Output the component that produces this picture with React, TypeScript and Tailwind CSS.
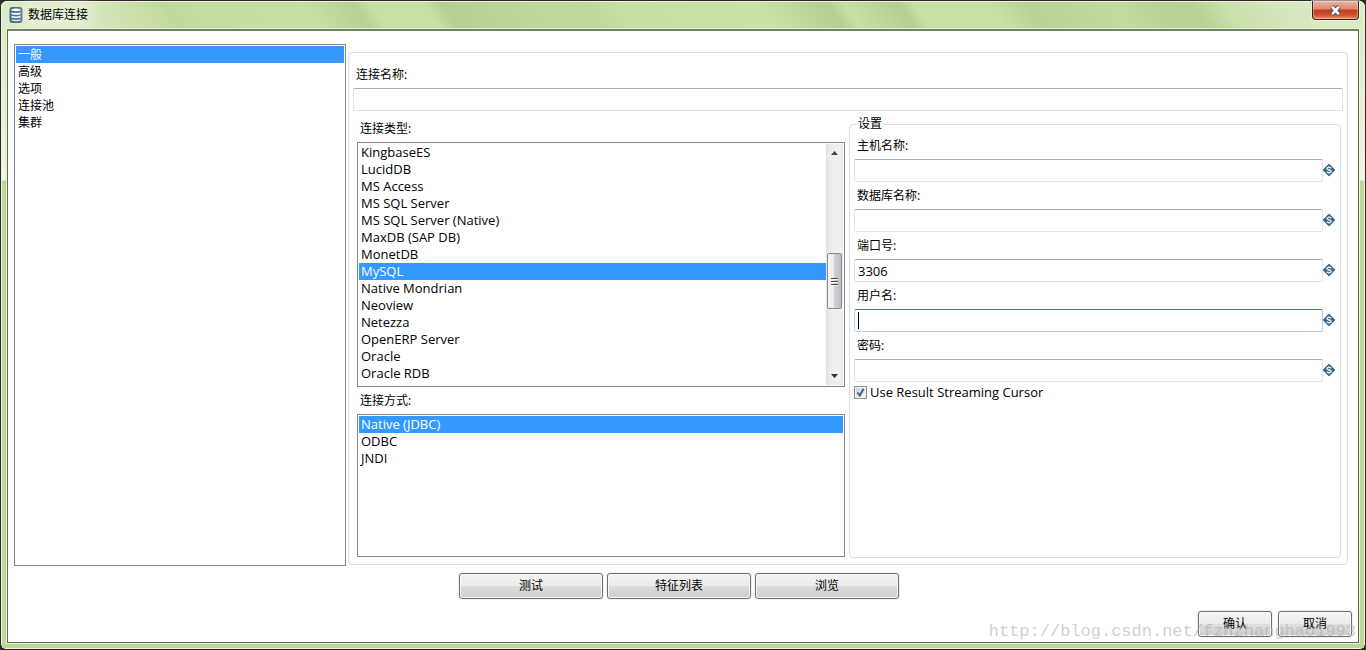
import { useState } from 'react'
import type { ReactNode } from 'react'

const SECTIONS = ['一般', '高级', '选项', '连接池', '集群']

const CONNECTION_TYPES = [
  'KingbaseES', 'LucidDB', 'MS Access', 'MS SQL Server', 'MS SQL Server (Native)',
  'MaxDB (SAP DB)', 'MonetDB', 'MySQL', 'Native Mondrian', 'Neoview', 'Netezza',
  'OpenERP Server', 'Oracle', 'Oracle RDB',
]

const ACCESS_METHODS = ['Native (JDBC)', 'ODBC', 'JNDI']

interface ListProps {
  label: string
  items: string[]
  value: string
  onChange: (v: string) => void
  className?: string
}

function List({ label, items, value, onChange, className = '' }: ListProps) {
  return (
    <ul role="listbox" aria-label={label} className={`leading-[17px] ${className}`}>
      {items.map(item => (
        <li
          key={item}
          role="option"
          aria-selected={item === value}
          onClick={() => onChange(item)}
          className={`h-[17px] px-0.5 whitespace-nowrap cursor-default ${item === value ? 'bg-[#3399ff] text-white' : ''}`}
        >
          {item}
        </li>
      ))}
    </ul>
  )
}

function ScrollBar() {
  return (
    <div aria-hidden className="w-[17px] shrink-0 flex flex-col items-center bg-[linear-gradient(90deg,#e3e3e3,#eeeeee_30%,#f0f0f0)]">
      <svg width="15" height="17" viewBox="0 0 15 17">
        <path d="M4 11 L7.5 7 L11 11 Z" fill="#444" />
      </svg>
      <div className="h-[92px]" />
      <div className="w-[15px] h-[56px] rounded-[2px] border border-[#8b8b8b] bg-[linear-gradient(90deg,#f6f6f6,#e9e9eb_45%,#d0d0d4_50%,#bcbcc2)] flex items-center justify-center">
        <svg width="8" height="9" viewBox="0 0 8 9">
          <path d="M0 1.5H7M0 4.5H7M0 7.5H7" stroke="#4a4a4a" />
          <path d="M0 2.5H7M0 5.5H7M0 8.5H7" stroke="#f5f5f5" />
        </svg>
      </div>
      <div className="flex-1" />
      <svg width="15" height="17" viewBox="0 0 15 17">
        <path d="M4 6 L7.5 10 L11 6 Z" fill="#333" />
      </svg>
    </div>
  )
}

function VariableIcon() {
  return (
    <svg width="13" height="13" viewBox="0 0 13 13" className="shrink-0" aria-hidden>
      <path d="M6 0.6 L11.4 6 L6 11.4 L0.6 6 Z" fill="#3d6786" stroke="#3d6786" strokeWidth="1.4" strokeLinejoin="round" />
      <path d="M8.2 4.2 C7.2 3.1 4 3.1 4 4.7 C4 6.2 8.2 5.8 8.2 7.4 C8.2 9 4.9 8.9 3.8 7.8" fill="none" stroke="#e8eff4" strokeWidth="1.3" />
      <path d="M6 2 V3.4 M6 8.6 V10" stroke="#c3d2dd" />
    </svg>
  )
}

interface FieldProps {
  id: string
  label: string
  defaultValue?: string
  type?: string
  active?: boolean
}

function Field({ id, label, defaultValue = '', type = 'text', active = false }: FieldProps) {
  return (
    <div className="mb-1.5">
      <label htmlFor={id} className="block ml-[3px] mb-[5px] h-4 leading-4">{label}</label>
      <div className="flex items-center">
        <div className="relative flex-1">
          <input
            id={id}
            type={type}
            defaultValue={defaultValue}
            className={`block w-full h-[23px] px-[3px] text-[13px] font-['Open_Sans',sans-serif] rounded-[2px] border bg-white outline-none ${
              active ? 'border-[#b5cfe7] border-t-[#3d7bad] caret-transparent' : 'border-[#e2e3ea] border-t-[#abadb3]'
            }`}
          />
          {active && <span className="absolute left-1 top-[3px] w-px h-[17px] bg-black" />}
        </div>
        <VariableIcon />
      </div>
    </div>
  )
}

function PushButton({ children, className }: { children: ReactNode; className: string }) {
  return (
    <button
      type="button"
      className={`h-[26px] rounded-[3px] border border-[#707070] bg-[linear-gradient(#f3f3f3,#ebebeb_48%,#dddddd_52%,#cdcdcd)] shadow-[inset_0_0_0_1px_#f8f8f8,0_0_0_1px_#f0f0f0] ${className}`}
    >
      {children}
    </button>
  )
}

function TitleBar() {
  return (
    <header className="h-[26px] flex items-start justify-between">
      <div className="flex items-center pl-1.5 pt-1">
        <svg width="16" height="18" viewBox="0 0 16 18" aria-hidden>
          <rect x="1.5" y="1" width="13" height="16" rx="3" fill="#44698a" />
          <path d="M3.5 3.2 Q8 1.8 12.5 3.2 V4.6 Q8 5.8 3.5 4.6 Z" fill="#fff" />
          <path d="M3.5 6.4 Q8 7.6 12.5 6.4 V8.2 Q8 9.4 3.5 8.2 Z" fill="#fff" />
          <path d="M3.5 9.8 Q8 11 12.5 9.8 V11.6 Q8 12.8 3.5 11.6 Z" fill="#eef4f9" />
          <path d="M3.5 13.2 Q8 14.4 12.5 13.2 V14.6 Q8 16 3.5 14.6 Z" fill="#dfeaf3" />
        </svg>
        <h1 className="ml-1 leading-4 rounded-full bg-white/35 shadow-[0_0_12px_8px_rgba(255,255,255,0.35)]">数据库连接</h1>
      </div>
      <button
        type="button"
        aria-label="关闭"
        className="-mt-px mr-[5px] w-[47px] h-[19px] rounded-b-[4px] border border-t-0 border-[#4c1a14] bg-[linear-gradient(#efb0a0,#dd8870_45%,#c23c20_50%,#c9502e_75%,#e38a62)] shadow-[inset_0_0_0_1px_rgba(255,255,255,0.35),0_0_0_1px_rgba(255,255,255,0.5)] flex items-center justify-center"
      >
        <svg width="13" height="11" viewBox="0 0 13 11">
          <path d="M3 1.6 L10 9.4 M10 1.6 L3 9.4" stroke="#4b5366" strokeWidth="4.6" />
          <path d="M3.2 1.8 L9.8 9.2 M9.8 1.8 L3.2 9.2" stroke="#fff" strokeWidth="2.6" />
        </svg>
      </button>
    </header>
  )
}

export default function App() {
  const [section, setSection] = useState('一般')
  const [connectionType, setConnectionType] = useState('MySQL')
  const [access, setAccess] = useState('Native (JDBC)')
  const [streaming, setStreaming] = useState(true)

  return (
    <div className="min-h-screen flex bg-[#2e2a2a] text-black text-[12px] font-['Noto_Sans','Noto_Sans_CJK_SC',sans-serif]">
      <div className="flex-1 flex rounded-[7px] border border-[#2b2626] bg-[#bcd995] bg-[linear-gradient(57deg,#dcebc8_0px,#d2e5b6_100px,#bfd99a_152px,#c3dd9d_180px,#c5df9f_270px,#b6d193_310px,#c6e0a2_325px,#c6e0a2_370px,#b5d092_385px,#bdd898_460px,#bed998_508px,#c5df9f_530px,#c7e2a4_650px,#b4cf90_708px,#c6e0a2_722px,#b4cf90_768px,#c6e0a2_780px,#c6e0a2_845px,#b8d392_874px,#c1db9a_950px,#b8d393_985px,#b7d292_1012px,#c8e0aa_1040px,#d6e8bd_1090px,#dcebc8_1155px)] bg-size-[100%_30px] bg-no-repeat">
        <div className="flex-1 flex flex-col rounded-[6px] border border-[#f0f5e6]">
          <TitleBar />
          <div className="flex-1 flex px-[5px] pb-1 bg-[linear-gradient(#dcebc8,#eef5e4_152px,#bcd995_153px,#bcd995)]">
            <main className="relative flex-1 flex flex-col border border-t-2 border-[#5f6c50] border-t-[#73806a] bg-white outline outline-[#e6f1d6] my-px">
              <div className="flex-1 flex gap-0.5 pl-1.5 pr-2.5 pt-[13px]">
                <List
                  label="类别"
                  items={SECTIONS}
                  value={section}
                  onChange={setSection}
                  className="w-[332px] shrink-0 border border-[#828790] p-px"
                />
                <section className="flex-1 mt-2 mb-px px-1 pt-3.5 pb-1.5 flex flex-col border border-[#d5dfe5] rounded-[4px]">
                  <label htmlFor="name" className="block ml-[3px] mb-[5px] h-4 leading-4">连接名称:</label>
                  <input
                    id="name"
                    type="text"
                    className="block h-[23px] px-[3px] text-[13px] rounded-[2px] border border-[#e2e3ea] border-t-[#abadb3] bg-white outline-none"
                  />
                  <div className="flex-1 grid grid-cols-[488fr_492fr] gap-1 pl-1 pr-0.5">
                    <div className="flex flex-col pt-2.5 pb-px">
                      <h2 className="ml-[3px] mb-[5px] h-4 leading-4">连接类型:</h2>
                      <div className="h-[245px] border border-[#828790] p-px flex">
                        <List
                          label="连接类型"
                          items={CONNECTION_TYPES}
                          value={connectionType}
                          onChange={setConnectionType}
                          className="flex-1 text-[13px] font-['Open_Sans',sans-serif]"
                        />
                        <ScrollBar />
                      </div>
                      <h2 className="mt-1.5 ml-[3px] mb-[5px] h-4 leading-4">连接方式:</h2>
                      <List
                        label="连接方式"
                        items={ACCESS_METHODS}
                        value={access}
                        onChange={setAccess}
                        className="flex-1 border border-[#828790] p-px text-[13px] font-['Open_Sans',sans-serif]"
                      />
                    </div>
                    <fieldset className="mt-[5px] px-1 border border-[#d5dfe5] rounded-[4px]">
                      <legend className="ml-[3px] px-px h-4 leading-4 mb-1.5">设置</legend>
                      <Field id="host" label="主机名称:" />
                      <Field id="database" label="数据库名称:" />
                      <Field id="port" label="端口号:" defaultValue="3306" />
                      <Field id="user" label="用户名:" active />
                      <Field id="password" label="密码:" type="password" />
                      <label className="-mt-1 flex items-center gap-[3px] h-4 text-[13px] leading-4 font-['Open_Sans',sans-serif]">
                        <span className="relative flex">
                          <input
                            type="checkbox"
                            checked={streaming}
                            onChange={e => setStreaming(e.target.checked)}
                            className="appearance-none w-[13px] h-[13px] border border-[#8e8f8f] bg-[linear-gradient(135deg,#cbcfd5,#f6f6f6)] shadow-[inset_0_0_0_1px_#f4f4f4]"
                          />
                          {streaming && (
                            <svg width="13" height="13" viewBox="0 0 13 13" className="absolute inset-0 pointer-events-none">
                              <path d="M3.5 6.5 L5.8 9.5 L9.6 2.8" fill="none" stroke="#4a5f97" strokeWidth="2" />
                            </svg>
                          )}
                        </span>
                        Use Result Streaming Cursor
                      </label>
                    </fieldset>
                  </div>
                </section>
              </div>
              <div className="flex justify-center gap-1 pt-[7px] pr-2">
                <PushButton className="w-36">测试</PushButton>
                <PushButton className="w-36">特征列表</PushButton>
                <PushButton className="w-36">浏览</PushButton>
              </div>
              <footer className="flex justify-end gap-1.5 pt-3 pb-[5px] pr-1.5">
                <PushButton className="w-[74px]">确认</PushButton>
                <PushButton className="w-[74px]">取消</PushButton>
              </footer>
              <p className="absolute right-0.5 bottom-0 text-[17px] leading-5 text-[#b0b0a8]/60 pointer-events-none font-['Liberation_Mono',monospace]">
                http://blog.csdn.net/fzhzhanghao1993
              </p>
            </main>
          </div>
        </div>
      </div>
    </div>
  )
}
